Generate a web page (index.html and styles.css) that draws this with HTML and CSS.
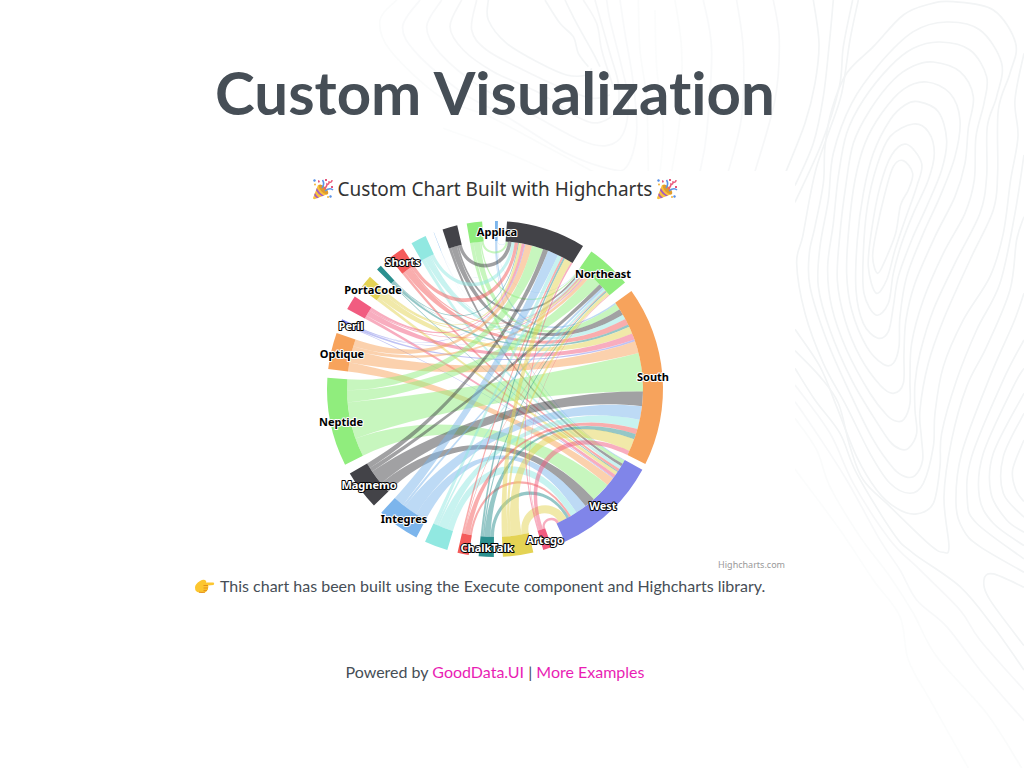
FILE: index.html
```html
<!DOCTYPE html>
<html lang="en">
<head>
<meta charset="utf-8">
<meta name="viewport" content="width=device-width, initial-scale=1">
<title>Custom Visualization</title>
<link rel="stylesheet" href="styles.css">
</head>
<body>
<svg class="backdrop" viewBox="0 0 1024 768" preserveAspectRatio="xMaxYMin meet" aria-hidden="true" id="backdrop"></svg>
<svg class="symbols" aria-hidden="true">
  <symbol id="popper" viewBox="0 0 22 22">
    <path d="M6 7 L1 20 Q1 21.5 3 21 L16 16 Q16 12 12 9 Q9 6 6 7Z" fill="#f9c23c"/>
    <path d="M4.800 10 Q8 16 12 17.500 L10 18.300 Q6 16 4 12.500Z M3 15 Q5 19 7 19.400 L5 20.200 Q3 19 2.200 17Z" fill="#a35ac0"/>
    <ellipse cx="11.500" cy="11.500" rx="6.300" ry="2.700" transform="rotate(46 11.500 11.500)" fill="#e09b2d"/>
    <path d="M10 10 Q13 6 10.500 2 M13 13 Q18 9 21 12" fill="none" stroke="#5b93e8" stroke-width="1.600"/>
    <path d="M12 11 Q15 9 15 6 Q17 7 17 4 Q20 5 20 2" fill="none" stroke="#ea5a7c" stroke-width="1.500"/>
    <path d="M2 1l2 1-1 2-2-1z M18 17l2 1-1 2-2-1z" fill="#5b93e8"/>
    <path d="M6 2l2 1-1 2-1-1z M13 1l2 0v2h-2z M19 8l2 0v2h-2z" fill="#e5567a"/>
    <circle cx="3" cy="6.500" r="1" fill="#f3b53b"/><circle cx="16" cy="19" r="1" fill="#f3b53b"/>
  </symbol>
  <symbol id="point" viewBox="0 0 20 16">
    <path d="M5 3 Q8 1 10 2 Q12 3 11 4.500 L18.500 4.500 Q20 5.500 18.500 7 L13 7.500 Q14 9 13 10 Q13.500 12 12 12.500 Q11.500 14.500 9 14.500 L4 14.500 Q0 14 0 9.500 Q0 6 5 3Z" fill="#fcc62f"/>
    <path d="M13 7.500 H8.500 M13 10 H8.500 M12 12.400 H8.500 M4 14.200 Q7 14.700 10 14.200" fill="none" stroke="#e48f1a" stroke-width="1"/>
  </symbol>
</svg>
<main class="page">
  <h1 class="heading">Custom Visualization</h1>
  <section class="chart">
    <h2 class="chart-title"><svg class="popper"><use href="#popper"/></svg><span>Custom Chart Built with Highcharts</span><svg class="popper"><use href="#popper"/></svg></h2>
    <svg class="wheel" viewBox="0 36 600 352" role="img" aria-label="Dependency wheel of products and regions" id="wheel"></svg>
    <a class="credit" href="#highcharts">Highcharts.com</a>
  </section>
  <p class="note"><svg class="point"><use href="#point"/></svg><span>This chart has been built using the Execute component and Highcharts library.</span></p>
  <footer class="footer">Powered by <a href="#ui">GoodData.UI</a> | <a href="#examples">More Examples</a></footer>
</main>
<script src="chart.js"></script>
</body>
</html>
```
FILE: styles.css
```css
* { box-sizing: border-box; }
body {
  margin: 0;
  background: #fff;
  color: #464e56;
  font-family: Lato, "Open Sans", sans-serif;
  font-size: 16px;
  font-variant-ligatures: none;
  line-height: 24px;
}
.symbols { display: none; }
.backdrop {
  position: absolute;
  top: 0;
  right: 0;
  width: 1024px;
  max-width: 100%;
  z-index: -1;
}
.backdrop path { fill: none; stroke: #f2f4f5; stroke-width: 5; }
.page {
  display: flex;
  flex-direction: column;
  align-items: center;
  padding: 56px 34px 40px 0;
}
.heading {
  margin: 0 0 43px;
  font-size: 60px;
  font-weight: 700;
  line-height: 72px;
  text-align: center;
}
.chart {
  display: flex;
  flex-direction: column;
  width: 100%;
  max-width: 600px;
  background: #fff;
  font-family: "Noto Sans", "Open Sans", sans-serif;
}
.chart-title {
  display: flex;
  align-items: center;
  justify-content: center;
  gap: 4px;
  margin: 0;
  color: #333;
  font-size: 19px;
  font-weight: 400;
  line-height: 36px;
}
.popper { width: 22px; height: 22px; flex: none; }
.wheel { display: block; width: 100%; }
.link { fill-opacity: 0.5; }
.label {
  font-size: 11px;
  font-weight: 700;
  text-anchor: middle;
  paint-order: stroke;
  stroke-width: 2px;
  stroke-linejoin: round;
}
.label-dark { fill: #000; stroke: #fff; }
.label-light { fill: #fff; stroke: #000; }
.credit {
  align-self: flex-end;
  margin-right: 10px;
  color: #999;
  font-size: 9px;
  line-height: 12px;
  text-decoration: none;
}
.note {
  display: flex;
  align-items: center;
  gap: 5px;
  width: 100%;
  max-width: 600px;
  margin: 3px 0 62px;
}
.point { width: 20px; height: 16px; flex: none; }
.footer a { color: #e91eb4; text-decoration: none; }
```
FILE: chart.js
```js
const NS = 'http://www.w3.org/2000/svg';
function add(parent, tag, attrs, text) {
  const el = document.createElementNS(NS, tag);
  for (const key in attrs) el.setAttribute(key, attrs[key]);
  if (text) el.textContent = text;
  parent.appendChild(el);
  return el;
}

/* Dependency wheel: angles are degrees clockwise from the top. */
const CX = 300, CY = 218, OUTER = 168, INNER = 148;
const regions = [
  { name: '', start: 4.1, end: 31.6, color: '#434348' },
  { name: 'Northeast', start: 35, end: 50.7, color: '#90ed7d' },
  { name: 'South', start: 54.3, end: 116.5, color: '#f7a35c' },
  { name: 'West', start: 118.7, end: 155.4, color: '#8085e9', light: true }
];
/* values: Midwest, Northeast, South, West */
const products = [
  { name: 'Applica', start: 0, end: 1, color: '#7cb5ec', values: [.1, .1, .6, .3] },
  { name: '', start: 350.3, end: 355.6, color: '#90ed7d', values: [.8, .5, 2.4, 1.3] },
  { name: '', start: 341.8, end: 347, color: '#434348', values: [1.4, .8, 2.4, 1.1] },
  { name: '', start: 338.6, end: 338.7, color: '#7cb5ec', values: [.02, .02, .02, .02] },
  { name: '', start: 330.2, end: 335.6, color: '#91e8e1', values: [1.2, .5, 1.9, 1.2] },
  { name: 'Shorts', start: 321.2, end: 326.8, color: '#f45b5b', light: true, values: [1.3, .6, 2.3, 1] },
  { name: '', start: 315.4, end: 317.2, color: '#2b908f', values: [.3, .2, .9, .4] },
  { name: 'PortaCode', start: 306.9, end: 311.9, color: '#e4d354', values: [1.1, .5, 2.8, 1.3] },
  { name: '', start: 298.4, end: 303.4, color: '#f15c80', values: [1.1, .5, 2.4, 1.3] },
  { name: 'Peril', start: 293, end: 294.5, color: '#8085e9', light: true, values: [.3, .2, .7, .3] },
  { name: 'Optique', start: 276.8, end: 289.5, color: '#f7a35c', values: [2.6, 1.4, 4.7, 3.3] },
  { name: 'Neptide', start: 243.2, end: 273.8, color: '#90ed7d', values: [4.4, 4.8, 14.6, 7.4] },
  { name: 'Magnemo', start: 226.1, end: 239.8, color: '#434348', light: true, values: [2, 1.6, 5.6, 4.1] },
  { name: 'Integres', start: 207.9, end: 222.6, color: '#7cb5ec', values: [4.1, .9, 5.2, 4.2] },
  { name: '', start: 196.5, end: 204.6, color: '#91e8e1', values: [1.6, .8, 3.6, 2.5] },
  { name: '', start: 189, end: 192.9, color: '#f45b5b', values: [.7, .3, 2, .8] },
  { name: 'ChalkTalk', start: 180.4, end: 185.6, color: '#2b908f', light: true, values: [.7, .5, 2, 1.1] },
  { name: '', start: 166.8, end: 177.3, color: '#e4d354', values: [2.7, 1.4, 4.8, 3.2] },
  { name: 'Artego', start: 160.2, end: 163.3, color: '#f15c80', light: true, values: [.6, .3, 1.7, 1] }
];
const wheel = document.getElementById('wheel');
function at(deg, r) {
  const a = deg * Math.PI / 180;
  return (CX + r * Math.sin(a)).toFixed(2) + ' ' + (CY - r * Math.cos(a)).toFixed(2);
}
const sum = (list) => list.reduce((a, b) => a + b, 0);

/* Radius of the control points: edges between near angles stay closer to the rim. */
function bend(a, b) {
  let distance = Math.abs(a - b) % 360;
  if (distance > 180) distance = 360 - distance;
  return INNER * (1 - 0.6 * Math.min(1, distance * Math.PI / 180));
}

const cursors = regions.map((r) => r.start);
const regionScale = regions.map((r, i) => (r.end - r.start) / sum(products.map((p) => p.values[i])));
products.forEach((p) => {
  const scale = (p.end - p.start) / sum(p.values);
  let from = p.start;
  for (let i = 3; i >= 0; i--) {
    const a0 = from, a1 = from + p.values[i] * scale;
    const b0 = cursors[i], b1 = b0 + p.values[i] * regionScale[i];
    from = a1;
    cursors[i] = b1;
    const c = bend(a1, b0), e = bend(a0, b1);
    const arc = `A${INNER} ${INNER} 0 0 1 `;
    add(wheel, 'path', {
      class: 'link',
      fill: p.color,
      d: `M${at(a0, INNER)}${arc}${at(a1, INNER)}C${at(a1, c)} ${at(b0, c)} ${at(b0, INNER)}` +
         `${arc}${at(b1, INNER)}C${at(b1, e)} ${at(a0, e)} ${at(a0, INNER)}Z`
    });
  }
});
const nodes = products.concat(regions);
nodes.forEach((n) => add(wheel, 'path', {
  fill: n.color,
  d: `M${at(n.start, OUTER)}A${OUTER} ${OUTER} 0 0 1 ${at(n.end, OUTER)}L${at(n.end, INNER)}` +
     `A${INNER} ${INNER} 0 0 0 ${at(n.start, INNER)}Z`
}));
nodes.filter((n) => n.name).forEach((n) => {
  const [x, y] = at((n.start + n.end) / 2, 158).split(' ').map(Number);
  add(wheel, 'text', { class: 'label ' + (n.light ? 'label-light' : 'label-dark'), x: Math.ceil(x), y: Math.round(y) + 5 }, n.name);
});

/* Contour lines of the backdrop; each row is opacity, closed flag, points. */
const right = [
  [1, 1, '370,482 398,520 385,570 362,615 347,700 318,775 293,820 278,770 290,690 315,580 340,500'],
  [1, 1, '380,433 425,490 410,560 375,660 345,750 320,840 288,879 265,800 275,690 300,560 335,465'],
  [1, 1, '400,372 445,395 463,460 445,540 400,640 365,730 340,820 325,910 288,945 252,880 250,760 262,620 290,500 330,410'],
  [1, 1, '415,305 475,335 500,420 485,510 440,620 395,720 355,830 340,920 325,995 292,1014 250,970 228,870 232,720 250,580 280,460 330,360 375,315'],
  [1, 1, '440,246 510,280 540,360 525,470 480,590 430,700 380,830 360,950 357,1040 340,1090 310,1093 260,1040 215,930 200,820 207,680 225,540 255,430 305,340 370,268'],
  [1, 1, '460,186 540,215 580,290 565,385 555,490 525,590 465,710 405,850 378,960 372,1060 370,1150 340,1180 300,1155 240,1070 195,960 172,840 180,700 197,560 220,430 270,330 340,240 400,198'],
  [1, 1, '480,126 570,150 620,230 612,310 588,410 583,540 555,640 490,760 430,900 395,1030 390,1140 390,1210 372,1258 350,1264 320,1245 270,1180 200,1050 155,920 143,800 160,670 175,530 200,400 250,300 330,200 400,145'],
  [1, 1, '500,66 600,90 665,190 650,290 622,380 620,530 600,640 530,780 460,930 420,1060 405,1150 405,1230 410,1300 385,1345 360,1347 330,1325 280,1250 215,1140 150,990 115,860 120,740 145,600 160,460 215,310 300,190 400,95'],
  [1, 1, '520,5 640,30 707,130 690,220 655,330 653,520 640,630 570,780 490,960 445,1090 420,1230 424,1310 428,1380 405,1427 375,1430 340,1405 280,1320 215,1190 140,1020 90,860 88,760 105,680 130,550 135,440 155,330 200,220 280,140 370,45 450,12'],
  [1, 0, '732,160 705,300 714,410 692,540 670,700 630,830 550,960 490,1100 465,1240 460,1340 430,1450 390,1480 330,1450 270,1360 200,1220 130,1090 75,940 50,790 68,710 90,590 110,500 145,400 185,280 210,120 235,0'],
  [1, 0, '732,465 705,640 660,850 590,990 530,1140 485,1300 480,1400 460,1510 410,1542 350,1525 290,1470 230,1370 170,1220 120,1100 45,988'],
  [1, 0, '732,650 710,720 690,870 620,1040 560,1160 515,1320 492,1490 507,1640 490,1657 450,1635 330,1520 250,1440 210,1340 175,1210 120,1130 45,1052'],
  [1, 0, '732,880 700,970 630,1130 545,1360 528,1510 550,1590 600,1640 732,1717'],
  [1, 0, '732,1020 670,1140 575,1370 562,1500 590,1570 732,1677'],
  [1, 0, '732,1105 700,1160 610,1360 598,1490 640,1570 732,1637'],
  [1, 0, '732,1180 640,1360 633,1480 680,1560 732,1597'],
  [1, 0, '732,1240 670,1370 670,1480 732,1552'],
  [1, 0, '732,1320 698,1410 708,1470 732,1505'],
  [1, 0, '732,1762 640,1722 612,1740 630,1800 732,1937'],
  [1, 0, '45,1105 105,1200 180,1300 230,1420 340,1600 400,1660 540,1760 640,1880 732,2010'],
  [.7, 0, '45,1155 150,1300 220,1450 330,1620 420,1710 540,1830 600,1920 732,2070'],
  [.6, 0, '45,1205 110,1300 200,1440 300,1620 360,1710 410,1800 500,1880 600,2010 732,2162'],
  [.4, 0, '45,1255 110,1350 150,1460 240,1610 330,1730 400,1840 470,1970 620,2140 725,2304'],
  [.3, 0, '45,1408 180,1590 280,1740 360,1850 385,1980 450,2100 565,2304'],
  [1, 0, '100,0 117,130 105,250 75,370 18,515'],
  [1, 0, '160,0 148,130 130,290 100,430 45,557'],
  [1, 0, '218,0 190,140 178,260 125,430 45,607']
];
const upper = [
  [.9, 0, '325,0 325,60 380,130 480,190 560,225 620,225 635,205'],
  [.9, 0, '495,0 540,70 580,110 595,160 625,200'],
  [.9, 0, '555,0 590,70 640,160 660,200'],
  [.8, 0, '610,0 650,70 665,150 690,230 700,260'],
  [.8, 0, '290,0 275,90 320,150 430,210 560,270 640,295 690,285'],
  [.8, 0, '245,0 210,80 250,150 340,215 480,280 600,355 660,367 710,330 715,250 690,160 645,0'],
  [.6, 0, '185,0 140,80 180,160 300,260 450,340 600,420 680,437 730,400 745,300 725,200 690,60 680,0'],
  [.5, 0, '120,0 68,80 110,160 250,280 380,350 560,460 690,507 740,500 770,400 760,250 735,100 720,0'],
  [.4, 0, '50,0 0,60 30,150 180,290 330,350 480,430 640,515'],
  [.3, 0, '190,385 340,440 510,515'],
  [.4, 0, '775,0 780,150 800,300 805,515'],
  [.3, 0, '825,30 830,200 850,380 840,515'],
  [.4, 0, '885,0 905,150 900,350 875,515'],
  [.5, 0, '970,0 995,150 980,400 960,515'],
  [.6, 0, '1070,0 1090,150 1085,350 1045,515'],
  [.7, 0, '1180,0 1198,120 1185,300 1125,515']
];
function smooth(points, closed) {
  const p = points.split(' ').map((s) => s.split(',').map(Number));
  const n = p.length;
  const get = (i) => closed ? p[(i + n) % n] : p[Math.max(0, Math.min(n - 1, i))];
  let d = 'M' + p[0];
  for (let i = 0; i < (closed ? n : n - 1); i++) {
    const [a, b, c, e] = [get(i - 1), get(i), get(i + 1), get(i + 2)];
    d += `C${b[0] + (c[0] - a[0]) / 6} ${b[1] + (c[1] - a[1]) / 6} ` +
         `${c[0] - (e[0] - b[0]) / 6} ${c[1] - (e[1] - b[1]) / 6} ${c[0]} ${c[1]}`;
  }
  return d;
}
function contours(rows, shift) {
  const group = add(document.getElementById('backdrop'), 'g', { transform: `translate(${shift} 0) scale(.3333)` });
  rows.forEach(([opacity, closed, points]) => add(group, 'path', { opacity, d: smooth(points, closed) }));
}
contours(right, 780);
contours(upper, 380);
```
